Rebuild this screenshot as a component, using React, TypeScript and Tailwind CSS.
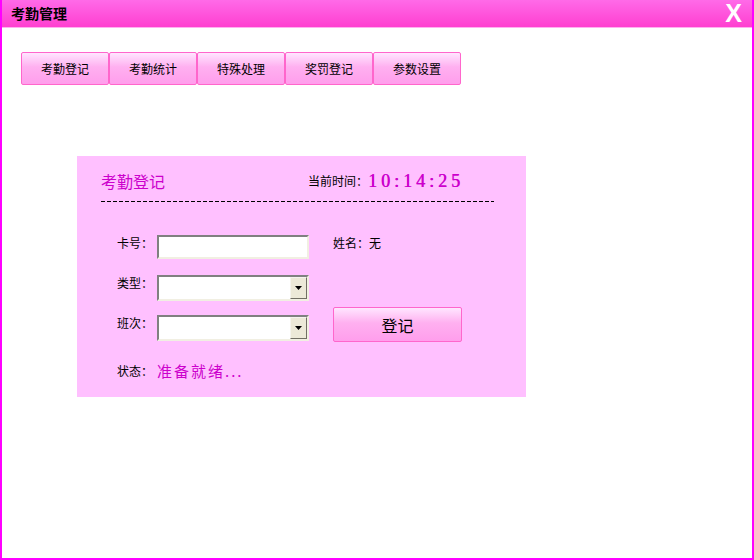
const cjk = "font-['SimSun','Noto_Sans_CJK_SC',sans-serif]";

const tabs = ["考勤登记", "考勤统计", "特殊处理", "奖罚登记", "参数设置"];

function TextBox() {
  return (
    <div className="h-[24px] w-[152px] border-2 border-t-[#808080] border-l-[#808080] border-r-[#f1efe2] border-b-[#f1efe2] bg-white" />
  );
}

function ComboBox() {
  return (
    <div className="flex h-[26px] w-[152px] border-2 border-t-[#808080] border-l-[#808080] border-r-[#f1efe2] border-b-[#f1efe2] bg-white">
      <div className="flex-1" />
      <div className="flex w-[17px] items-center justify-center border border-t-[#f5f4ee] border-l-[#f5f4ee] border-r-[#716f64] border-b-[#716f64] bg-[#ece9d8]">
        <svg width="7" height="4" viewBox="0 0 7 4">
          <path d="M0 0h7L3.5 4z" fill="#000" />
        </svg>
      </div>
    </div>
  );
}

function FieldRow({ label, children, className }: { label: string; children: React.ReactNode; className?: string }) {
  return (
    <div className={`flex items-start ${className ?? ""}`}>
      <span className="w-[40px] text-[12px] leading-[16px] text-black">{label}</span>
      {children}
    </div>
  );
}

export default function App() {
  return (
    <div className={`flex h-[560px] w-[754px] flex-col border-x-2 border-b-2 border-[#ff00ff] bg-white ${cjk}`}>
      <div className="flex h-[27px] shrink-0 items-center justify-between bg-[linear-gradient(to_bottom,#ff6ae8,#ff3fd0)] pl-[9px] pr-[10px]">
        <span className="text-[14px] font-bold text-black">考勤管理</span>
        <span className="font-['Liberation_Sans',sans-serif] text-[25px] leading-[25px] font-bold text-white">X</span>
      </div>
      <div className="border-t border-[#ffb0f0]" />

      <div className="flex pl-[19px] pt-[24px]">
        {tabs.map((t) => (
          <button
            key={t}
            type="button"
            className="flex h-[33px] w-[88px] items-center justify-center rounded-[2px] border border-[#ff66cc] bg-[linear-gradient(to_bottom,#ffe6ff,#ffb0f0_45%,#ff9eec)] text-[12px] text-black"
          >
            {t}
          </button>
        ))}
      </div>

      <div className="ml-[75px] mt-[71px] h-[241px] w-[449px] bg-[#ffc0ff] pl-[24px] pt-[14px]">
        <div className="flex h-[22px] items-end gap-[143px]">
          <span className="text-[16px] leading-[22px] text-[#cc00cc]">考勤登记</span>
          <div className="flex items-end">
            <span className="mb-[2px] text-[12px] text-black">当前时间：</span>
            <span className="font-['Liberation_Serif',serif] text-[18px] leading-[22px] font-normal tracking-[4px] text-[#cc00cc] [text-shadow:0.4px_0_0_#cc00cc]">
              10:14:25
            </span>
          </div>
        </div>
        <div className="mt-[9px] h-px w-[393px] bg-[linear-gradient(to_right,#000_4px,transparent_4px)] bg-[length:6px_1px]" />

        <div className="flex pl-[16px]">
          <div className="flex flex-col">
            <FieldRow label="卡号：" className="mt-[33px] h-[24px]">
              <TextBox />
            </FieldRow>
            <FieldRow label="类型：" className="mt-[16px] h-[26px]">
              <ComboBox />
            </FieldRow>
            <FieldRow label="班次：" className="mt-[14px] h-[26px]">
              <ComboBox />
            </FieldRow>
            <div className="mt-[20px] flex h-[20px] items-center">
              <span className="w-[40px] text-[12px] text-black">状态：</span>
              <span className="text-[15px] tracking-[2px] text-[#cc00cc]">准备就绪...</span>
            </div>
          </div>
          <div className="ml-[24px] flex flex-col">
            <div className="mt-[33px] h-[24px] text-[12px] leading-[16px] text-black">姓名：无</div>
            <button
              type="button"
              className="mt-[48px] flex h-[35px] w-[129px] items-center justify-center rounded-[2px] border border-[#ff66cc] bg-[linear-gradient(to_bottom,#ffe6ff,#ffb0f0_45%,#ff9eec)] text-[16px] text-black"
            >
              登记
            </button>
          </div>
        </div>
      </div>
    </div>
  );
}
